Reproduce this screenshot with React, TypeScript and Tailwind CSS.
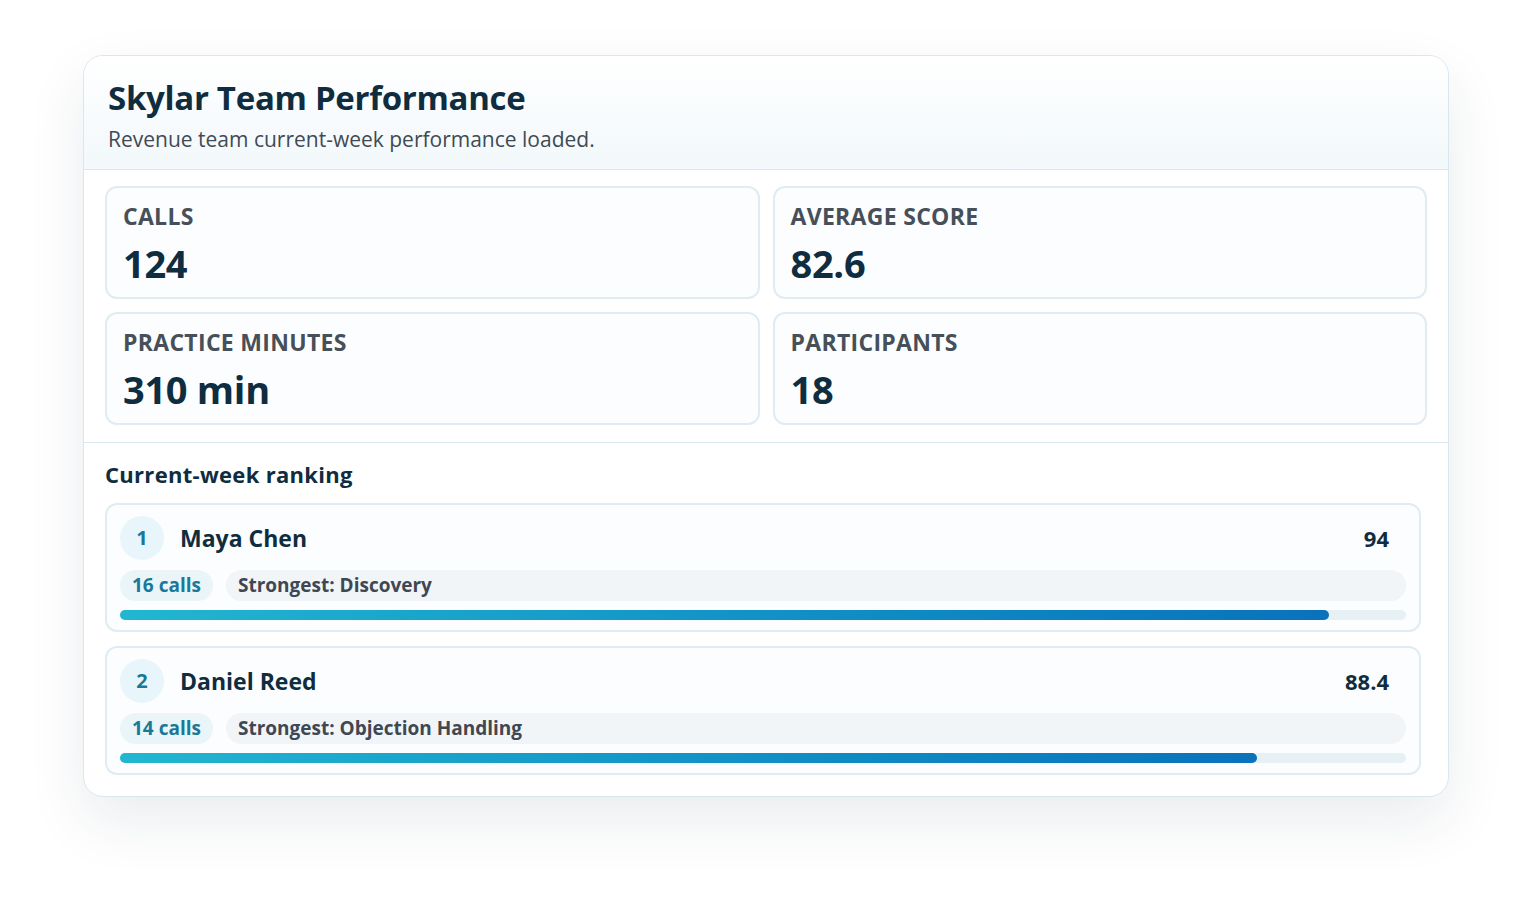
const stats = [
  { label: 'Calls', value: '124' },
  { label: 'Average Score', value: '82.6' },
  { label: 'Practice Minutes', value: '310 min' },
  { label: 'Participants', value: '18' },
]

const ranking = [
  { rank: 1, name: 'Maya Chen', score: '94', pct: 94, calls: 16, strongest: 'Discovery' },
  { rank: 2, name: 'Daniel Reed', score: '88.4', pct: 88.4, calls: 14, strongest: 'Objection Handling' },
]

export default function App() {
  return (
    <div className="min-h-[907px] bg-white px-[83px] pt-[55px] font-['Open_Sans','Noto_Sans',sans-serif]">
      <div className="overflow-hidden rounded-[20px] border border-[#d9e8ef] bg-white shadow-[0_24px_60px_rgba(15,45,61,0.09)]">
        {/* Header */}
        <div className="border-b border-[#d9e8ef] bg-gradient-to-b from-white to-[#f2f8fb] px-6 pt-[20px] pb-[16px]">
          <h1 className="text-[33px] leading-[44px] font-bold tracking-[-0.3px] text-[#0f2d3e]">Skylar Team Performance</h1>
          <p className="mt-[5px] text-[21px] leading-[28px] text-[#3f4a54]">Revenue team current-week performance loaded.</p>
        </div>

        {/* Stats */}
        <div className="grid grid-cols-2 gap-[13px] border-b border-[#d9e8ef] px-[21px] pt-[16px] pb-[17px]">
          {stats.map((s) => (
            <div key={s.label} className="h-[113px] rounded-[12px] border-2 border-[#e0ecf2] bg-[#fbfdfe] px-[16px] pt-[13px]">
              <div className="text-[23px] leading-[30px] font-bold tracking-[0.3px] uppercase text-[#474f59]">{s.label}</div>
              <div className="mt-[10px] text-[38px] leading-[44px] font-bold tracking-[-0.3px] text-[#0f2d3e]">{s.value}</div>
            </div>
          ))}
        </div>

        {/* Ranking */}
        <div className="pt-[17px] pr-[27px] pb-[21px] pl-[21px]">
          <h2 className="text-[22px] leading-[28px] font-bold tracking-[0.3px] text-[#0f2d3e]">Current-week ranking</h2>
          <div className="mt-[15px] flex flex-col gap-[14px]">
            {ranking.map((r) => (
              <div key={r.rank} className="rounded-[12px] border-2 border-[#e0ecf2] bg-[#fbfdfe] px-[13px] pt-[11px] pb-[10px]">
                <div className="flex items-center">
                  <div className="flex h-[44px] w-[44px] items-center justify-center rounded-full bg-[#e8f6fb] text-[20px] font-bold text-[#1a7898]">
                    {r.rank}
                  </div>
                  <div className="ml-[16px] flex-1 text-[23px] font-bold text-[#0f2d3e]">{r.name}</div>
                  <div className="mr-[17px] text-[22px] font-bold text-[#0f2d3e]">{r.score}</div>
                </div>
                <div className="mt-[10px] flex items-center gap-[13px]">
                  <span className="rounded-full bg-[#eaf5f9] px-[12px] text-[19px] leading-[31px] font-bold text-[#1a7898]">
                    {r.calls} calls
                  </span>
                  <span className="flex-1 rounded-full bg-[#f1f5f8] px-[12px] text-[19px] leading-[31px] font-bold text-[#3f4852]">
                    Strongest: {r.strongest}
                  </span>
                </div>
                <div className="mt-[9px] h-[10px] rounded-full bg-[#e6f0f5]">
                  <div
                    className="h-full rounded-full bg-gradient-to-r from-[#22b6d0] to-[#0a72bb]"
                    style={{ width: `${r.pct}%` }}
                  />
                </div>
              </div>
            ))}
          </div>
        </div>
      </div>
    </div>
  )
}
